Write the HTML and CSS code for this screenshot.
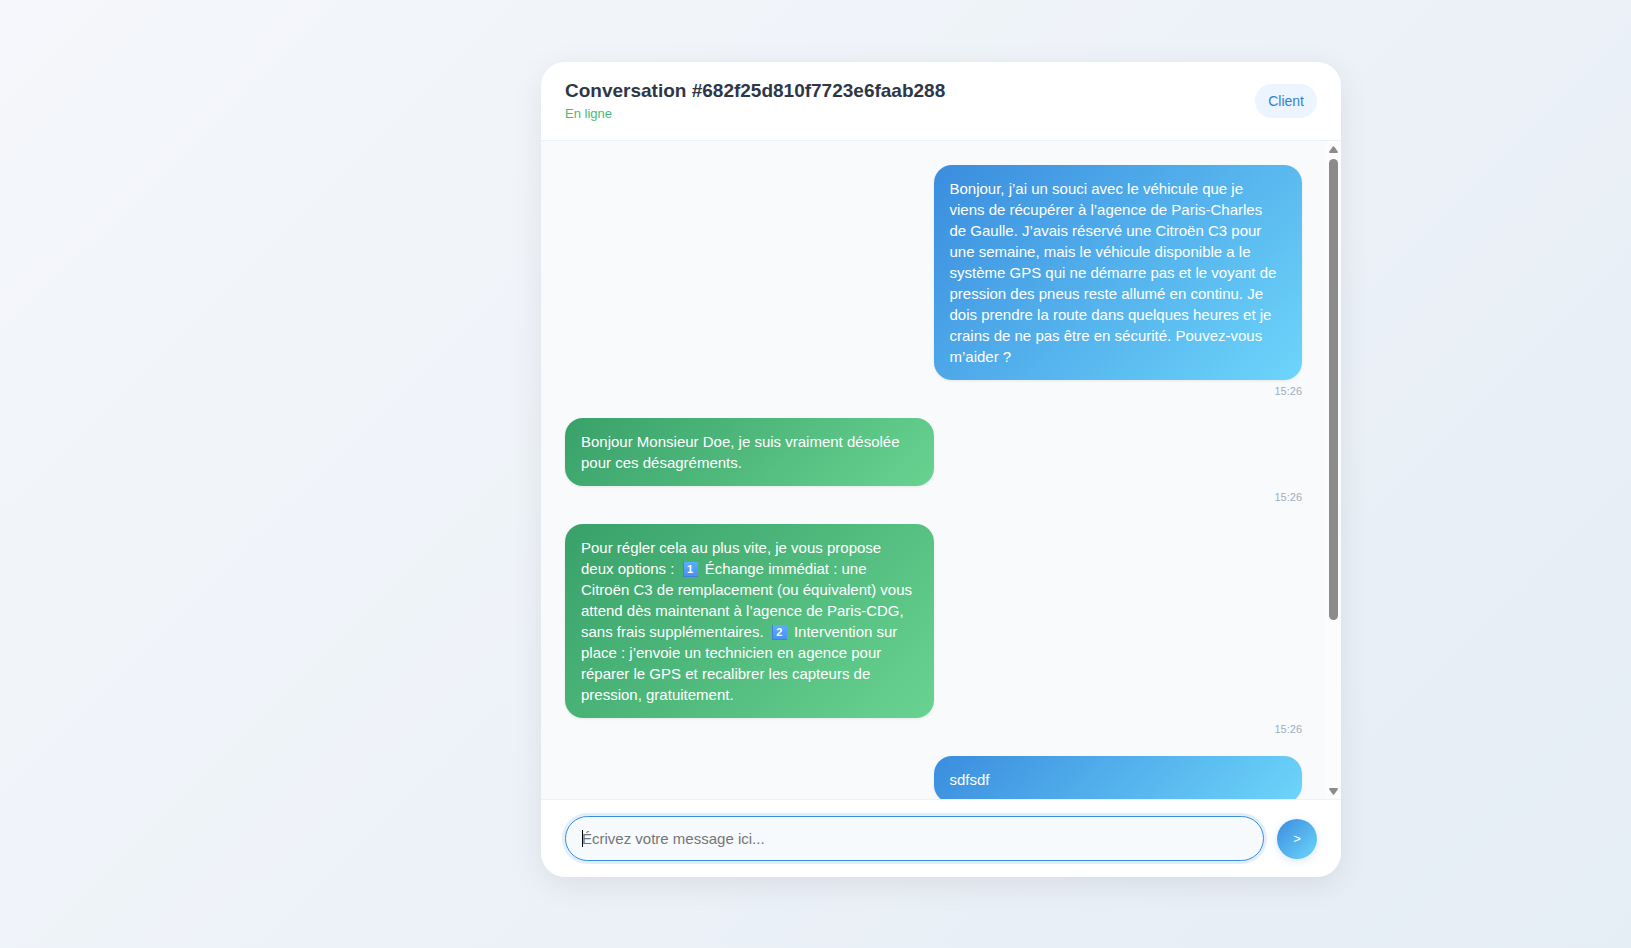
FILE: index.html
```html
<!DOCTYPE html>
<html lang="fr">
<head>
<meta charset="utf-8">
<title>Conversation</title>
<link rel="stylesheet" href="styles.css">
</head>
<body>
<main class="chat">
  <header class="chat-header">
    <div class="chat-info">
      <h1 class="chat-title">Conversation #682f25d810f7723e6faab288</h1>
      <p class="chat-status">En ligne</p>
    </div>
    <span class="role-badge">Client</span>
  </header>
  <section class="chat-body">
    <div class="messages">
      <article class="message sent">
        <p class="bubble">Bonjour, j’ai un souci avec le véhicule que je viens de récupérer à l’agence de Paris-Charles de Gaulle. J’avais réservé une Citroën C3 pour une semaine, mais le véhicule disponible a le système GPS qui ne démarre pas et le voyant de pression des pneus reste allumé en continu. Je dois prendre la route dans quelques heures et je crains de ne pas être en sécurité. Pouvez-vous m’aider ?</p>
        <time class="time">15:26</time>
      </article>
      <article class="message received">
        <p class="bubble">Bonjour Monsieur Doe, je suis vraiment désolée pour ces désagréments.</p>
        <time class="time">15:26</time>
      </article>
      <article class="message received">
        <p class="bubble">Pour régler cela au plus vite, je vous propose deux options : <span class="keycap">1</span> Échange immédiat : une Citroën C3 de remplacement (ou équivalent) vous attend dès maintenant à l’agence de Paris-CDG, sans frais supplémentaires. <span class="keycap">2</span> Intervention sur place : j’envoie un technicien en agence pour réparer le GPS et recalibrer les capteurs de pression, gratuitement.</p>
        <time class="time">15:26</time>
      </article>
      <article class="message sent">
        <p class="bubble">sdfsdf</p>
      </article>
    </div>
    <div class="scrollbar" aria-hidden="true">
      <svg class="arrow" viewBox="0 0 9 7"><path d="M4.5 .3Q5.1 .3 5.7 1.2L8.7 5.5Q9.3 7 8 7H1Q-.3 7 .3 5.5L3.3 1.2Q3.9 .3 4.5 .3Z" fill="#8b8b8b"/></svg>
      <div class="track"><div class="thumb"></div></div>
      <svg class="arrow" viewBox="0 0 9 7"><path d="M4.5 6.7Q5.1 6.7 5.7 5.8L8.7 1.5Q9.3 0 8 0H1Q-.3 0 .3 1.5L3.3 5.8Q3.9 6.7 4.5 6.7Z" fill="#8b8b8b"/></svg>
    </div>
  </section>
  <form class="composer">
    <div class="field">
      <input class="composer-input" type="text" aria-label="Votre message" placeholder="Écrivez votre message ici...">
    </div>
    <button class="send" type="button" aria-label="Envoyer">&gt;</button>
  </form>
</main>
</body>
</html>
```
FILE: styles.css
```css
* {
  box-sizing: border-box;
}

body {
  margin: 0;
  min-height: 100vh;
  padding: 62px 0 0 251px;
  background: linear-gradient(135deg, #f5f7fb 0%, #e5edf5 100%);
  font-family: "Liberation Sans", Arial, sans-serif;
  color: #2d3748;
}

h1, p {
  margin: 0;
}

.chat {
  display: flex;
  flex-direction: column;
  max-width: 800px;
  height: 86vh;
  margin: 0 auto;
  overflow: hidden;
  border-radius: 24px;
  background: #fff;
  box-shadow: 0 8px 32px rgba(0, 0, 0, 0.08);
}

.chat-header {
  display: flex;
  align-items: center;
  justify-content: space-between;
  padding: 16px 24px;
  border-bottom: 1px solid #edf2f7;
}

.chat-title {
  font-size: 19px;
  line-height: 26px;
}

.chat-status {
  font-size: 13px;
  line-height: 20px;
  color: #48bb78;
}

.role-badge {
  padding: 8px 13px;
  border-radius: 20px;
  background: #ebf4ff;
  color: #3182ce;
  font-size: 14px;
  line-height: 18px;
}

.chat-body {
  display: flex;
  flex: 1;
  min-height: 0;
  background: #f9fafc;
}

.messages {
  display: flex;
  flex: 1;
  flex-direction: column;
  gap: 21px;
  padding: 24px;
  overflow-y: auto;
  scrollbar-width: none;
}

.message {
  display: flex;
  flex: none;
  flex-direction: column;
}

.bubble {
  width: 50%;
  padding: 13px 16px;
  border-radius: 18px;
  box-shadow: 0 1px 3px rgba(0, 0, 0, 0.08);
  color: #fff;
  font-size: 15px;
  line-height: 21px;
}

.sent .bubble {
  align-self: flex-end;
  padding-right: 22px;
  background: linear-gradient(135deg, #3a8dde, #6dd5fa);
}

.received .bubble {
  background: linear-gradient(135deg, #38a169, #68d391);
}

.time {
  align-self: flex-end;
  margin-top: 5px;
  color: #a0aec0;
  font-size: 11px;
  line-height: 12px;
}

.keycap {
  display: inline-block;
  width: 15px;
  margin: 0 3px 0 4px;
  background: linear-gradient(#5aadff, #4b8ff0);
  box-shadow: inset 1px -1px #3f80dc;
  font-size: 11px;
  font-weight: bold;
  line-height: 15px;
  text-align: center;
  vertical-align: 1px;
}

.scrollbar {
  display: flex;
  flex-direction: column;
  align-items: center;
  gap: 6px;
  width: 15px;
  padding: 5px 0 4px;
  background: #fcfcfc;
}

.arrow {
  width: 9px;
  height: 7px;
}

.track {
  flex: 1;
}

.thumb {
  width: 9px;
  height: 74%;
  border-radius: 5px;
  background: #8b8b8b;
}

.composer {
  display: flex;
  align-items: center;
  gap: 13px;
  padding: 16px 24px;
  border-top: 1px solid #edf2f7;
}

.field {
  position: relative;
  display: flex;
  flex: 1;
}

/* Text cursor shown over the empty field */
.field::before {
  content: "";
  position: absolute;
  top: 14px;
  left: 17px;
  width: 1px;
  height: 17px;
  background: #000;
}

.composer-input {
  flex: 1;
  min-width: 0;
  height: 45px;
  padding: 0 16px;
  border: 1px solid #3a8dde;
  border-radius: 24px;
  outline: 0;
  background: #f7fafc;
  box-shadow: 0 0 0 3px rgba(58, 141, 222, 0.15);
  color: #2d3748;
  font: 15px "Liberation Sans", Arial, sans-serif;
}

.composer-input::placeholder {
  color: #757575;
}

.send {
  width: 40px;
  height: 40px;
  padding: 0;
  border: 0;
  border-radius: 50%;
  background: linear-gradient(135deg, #3a8dde, #6dd5fa);
  box-shadow: 0 2px 8px rgba(58, 141, 222, 0.2);
  color: #fff;
  font: 13px "Liberation Sans", Arial, sans-serif;
}
```
